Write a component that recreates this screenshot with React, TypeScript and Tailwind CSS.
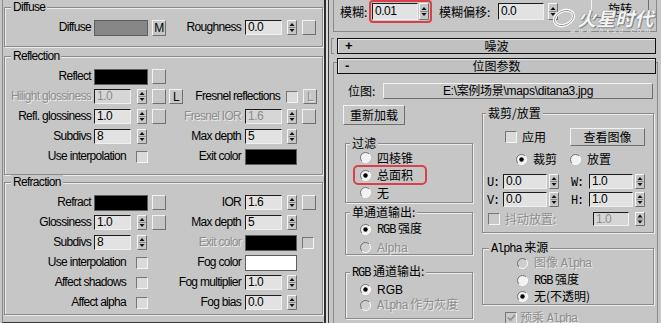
import React from "react";

const SANS = "font-['Liberation_Sans','Noto_Sans_CJK_SC',sans-serif]";
const CJK = "font-['Noto_Sans_CJK_SC',sans-serif]";
const MONO = "font-['Liberation_Mono','Noto_Sans_CJK_SC',monospace] text-[12px] tracking-[-1.1px]";
const DIM = "text-[#8d8d8d] [text-shadow:1px_1px_0_#ececec]";
const RAISED = "border border-t-[#f2f2f2] border-l-[#f2f2f2] border-b-[#6f6f6f] border-r-[#6f6f6f]";
const SUNKEN = "border border-t-[#1c1c1c] border-l-[#1c1c1c] border-b-[#f0f0f0] border-r-[#f0f0f0]";

type Kids = { children?: React.ReactNode; className?: string };

const Spin = ({ h = 15, className = "" }: { h?: number; className?: string }) => {
  const m = h / 2;
  return (
    <svg width={10} height={h} viewBox={`0 0 10 ${h}`} className={`shrink-0 ${className}`}>
      <rect x={0} y={0} width={10} height={h} fill="#c6c6c6" />
      <path d={`M0.5 ${h - 0.5}V0.5H9.5`} stroke="#f6f6f6" fill="none" />
      <path d={`M9.5 0.5V${h - 0.5}H0.5`} stroke="#6f6f6f" fill="none" />
      <path d={`M1.5 ${m}H8.5`} stroke="#8a8a8a" />
      <path d={`M5 ${m - 4.5}L7.5 ${m - 1.5}H2.5Z`} fill="#111" />
      <path d={`M2.5 ${m + 1.5}H7.5L5 ${m + 4.5}Z`} fill="#111" />
    </svg>
  );
};

const Field = ({ v, cls, dim = false }: { v: string; cls: string; dim?: boolean }) => (
  <div
    className={`flex shrink-0 items-center pl-[2px] text-[12px] leading-[13px] tracking-[-0.5px] ${SANS} ${SUNKEN} ${
      dim ? "bg-[#d6d6d6] text-[#8d8d8d]" : "bg-[#e2e2e2] text-black"
    } ${cls}`}
  >
    {v}
  </div>
);

const Btn = ({ children, className = "" }: Kids) => (
  <div className={`flex shrink-0 items-center justify-center leading-[14px] ${RAISED} ${className}`}>{children}</div>
);

const Swatch = ({ className = "" }: { className?: string }) => (
  <div className={`h-[16px] shrink-0 border border-[#5e5e5e] ${className}`} />
);

const Check = ({ checked = false, dim = false, className = "" }: { checked?: boolean; dim?: boolean; className?: string }) => (
  <div
    className={`flex h-[12px] w-[12px] shrink-0 items-center justify-center border border-t-[#767676] border-l-[#767676] border-b-[#f4f4f4] border-r-[#f4f4f4] ${
      dim ? "bg-[#c9c9c9]" : "bg-[#dadada]"
    } ${className}`}
  >
    {checked && (
      <svg width="9" height="8" viewBox="0 0 9 8">
        <path d="M1 3.5L3.5 6L8 1" stroke={dim ? "#8d8d8d" : "#000"} strokeWidth="1.6" fill="none" />
      </svg>
    )}
  </div>
);

const Radio = ({ checked = false, dim = false }: { checked?: boolean; dim?: boolean }) => (
  <svg width="11" height="11" viewBox="0 0 11 11" className="shrink-0">
    <circle cx="5.5" cy="5.5" r="5" fill={dim ? "#cdcdcd" : "#f2f2f2"} />
    <path d="M1.96 9.04A5 5 0 0 1 9.04 1.96" stroke="#6e6e6e" fill="none" />
    <path d="M9.04 1.96A5 5 0 0 1 1.96 9.04" stroke="#ffffff" fill="none" />
    {checked && <circle cx="5.5" cy="5.5" r="2.2" fill="#000" />}
  </svg>
);

const Group = ({ title, className = "", legendClass = "", children }: Kids & { title: React.ReactNode; legendClass?: string }) => (
  <fieldset className={`border border-[#8a8a8a] shadow-[inset_1px_1px_0_#ececec,1px_1px_0_#ececec] ${className}`}>
    <legend className={`bg-[#c6c6c6] px-[2px] leading-[14px] ${legendClass}`}>{title}</legend>
    {children}
  </fieldset>
);

// left (V-Ray material) rows
const Lbl = ({ children, className = "", dim = false }: Kids & { dim?: boolean }) => (
  <span className={`flex shrink-0 justify-end whitespace-nowrap leading-[15px] ${dim ? DIM : ""} ${className}`}>{children}</span>
);

const Row = ({ left, right }: { left?: React.ReactNode; right?: React.ReactNode }) => (
  <div className="flex h-[15px] items-center">
    <div className="flex w-[180px] shrink-0 items-center">{left}</div>
    <div className="flex items-center">{right}</div>
  </div>
);

const SpinL = ({ label, v, btn = true, l, dim = false }: { label: string; v: string; btn?: boolean; l?: boolean; dim?: boolean }) => (
  <>
    <Lbl className="w-[86px]" dim={dim}>{label}</Lbl>
    <Field cls="ml-[3px] h-[15px] w-[37px]" v={v} dim={dim} />
    <Spin className="ml-[6px]" />
    {btn && <Btn className="ml-[5px] h-[15px] w-[14px]" />}
    {l && <Btn className="ml-[3px] h-[15px] w-[14px]">L</Btn>}
  </>
);

const SpinR = ({ label, v, btn = true, dim = false }: { label: string; v: string; btn?: boolean; dim?: boolean }) => (
  <>
    <Lbl className="w-[56px]" dim={dim}>{label}</Lbl>
    <Field cls="ml-[4px] h-[15px] w-[37px]" v={v} dim={dim} />
    <Spin className="ml-[5px]" />
    {btn && <Btn className="ml-[5px] h-[15px] w-[14px]" />}
  </>
);

const CheckL = ({ label }: { label: string }) => (
  <>
    <Lbl className="w-[121px]">{label}</Lbl>
    <Check className="ml-[10px]" />
  </>
);

const SwatchL = ({ label, color }: { label: string; color: string }) => (
  <>
    <Lbl className="w-[86px]">{label}</Lbl>
    <Swatch className={`ml-[3px] w-[54px] ${color}`} />
    <Btn className="ml-[4px] h-[15px] w-[14px]" />
  </>
);

const LeftPanel = () => (
  <div className={`ml-[2px] flex h-[323px] w-[321px] shrink-0 flex-col border-b border-l border-b-[#3a3a3a] border-l-[#8a8a8a] pl-[1px] text-[12px] tracking-[-0.7px] ${SANS}`}>
    <Group title="Diffuse" className="pb-[11px]" legendClass="ml-[6px]">
      <div className="mt-[6px] flex flex-col">
        <Row
          left={
            <>
              <Lbl className="w-[86px]">Diffuse</Lbl>
              <Swatch className="ml-[3px] w-[54px] bg-[#878787]" />
              <Btn className="ml-[4px] h-[16px] w-[14px]">M</Btn>
            </>
          }
          right={<SpinR label="Roughness" v="0.0" />}
        />
      </div>
    </Group>

    <Group title="Reflection" className="mt-[2px] pb-[10px]" legendClass="ml-[6px]">
      <div className="mt-[6px] flex flex-col gap-[5px]">
        <Row left={<SwatchL label="Reflect" color="bg-black" />} />
        <Row
          left={<SpinL label="Hilight glossiness" v="1.0" l dim />}
          right={
            <>
              <Lbl className="w-[95px]">Fresnel reflections</Lbl>
              <Check className="ml-[6px]" />
              <Btn className={`ml-[5px] h-[15px] w-[14px] ${DIM}`}>L</Btn>
            </>
          }
        />
        <Row left={<SpinL label="Refl. glossiness" v="1.0" />} right={<SpinR label="Fresnel IOR" v="1.6" dim />} />
        <Row left={<SpinL label="Subdivs" v="8" btn={false} />} right={<SpinR label="Max depth" v="5" btn={false} />} />
        <Row
          left={<CheckL label="Use interpolation" />}
          right={
            <>
              <Lbl className="w-[56px]">Exit color</Lbl>
              <Swatch className="ml-[4px] w-[52px] bg-black" />
            </>
          }
        />
      </div>
    </Group>

    <Group title="Refraction" className="pb-[4px]" legendClass="ml-[6px]">
      <div className="mt-[6px] flex flex-col gap-[5px]">
        <Row left={<SwatchL label="Refract" color="bg-black" />} right={<SpinR label="IOR" v="1.6" />} />
        <Row left={<SpinL label="Glossiness" v="1.0" />} right={<SpinR label="Max depth" v="5" btn={false} />} />
        <Row
          left={<SpinL label="Subdivs" v="8" btn={false} />}
          right={
            <>
              <Lbl className="w-[56px]" dim>Exit color</Lbl>
              <Swatch className="ml-[4px] w-[52px] bg-black" />
              <Check className="ml-[5px]" dim />
            </>
          }
        />
        <Row
          left={<CheckL label="Use interpolation" />}
          right={
            <>
              <Lbl className="w-[56px]">Fog color</Lbl>
              <Swatch className="ml-[4px] w-[52px] bg-white" />
            </>
          }
        />
        <Row left={<CheckL label="Affect shadows" />} right={<SpinR label="Fog multiplier" v="1.0" btn={false} />} />
        <Row left={<CheckL label="Affect alpha" />} right={<SpinR label="Fog bias" v="0.0" btn={false} />} />
      </div>
    </Group>
  </div>
);

// right (bitmap parameters) panel
const Header = ({ sign, title, className = "" }: { sign: string; title: string; className?: string }) => (
  <div className={`flex h-[16px] w-[319px] shrink-0 items-center border border-[#111] bg-[#c1c1c1] shadow-[inset_1px_1px_0_#e6e6e6] ${className}`}>
    <span className={`w-[22px] pl-[7px] text-[13px] font-bold leading-[14px] ${SANS}`}>{sign}</span>
    <span className="flex-1 text-center leading-[14px]">{title}</span>
    <span className="w-[22px]" />
  </div>
);

const Opt = ({ label, checked = false, dim = false, className = "" }: { label: React.ReactNode; checked?: boolean; dim?: boolean; className?: string }) => (
  <div className={`flex items-center ${className}`}>
    <Radio checked={checked} dim={dim} />
    <span className={`ml-[6px] whitespace-nowrap leading-[14px] ${dim ? DIM : ""}`}>{label}</span>
  </div>
);

const Mono = ({ children }: Kids) => <span className={MONO}>{children}</span>;

const RightPanel = () => (
  <div className={`relative flex h-[323px] w-[332px] shrink-0 flex-col text-[12px] ${CJK}`}>
    <div className="ml-[4px] flex h-[32px] w-[324px] shrink-0 items-start border-b border-l border-r border-[#8a8a8a]">
      <span className="ml-[6px] mt-[3px] w-[29px] leading-[17px]">模糊:</span>
      <div className="flex h-[23px] items-center rounded-[4px] border-2 border-[#d9414a] px-[1px]">
        <Field cls="h-[17px] w-[46px]" v="0.01" />
        <Spin h={17} className="ml-[1px]" />
      </div>
      <span className="ml-[7px] mt-[3px] w-[59px] leading-[17px]">模糊偏移:</span>
      <Field cls="mt-[3px] h-[17px] w-[46px]" v="0.0" />
      <Spin h={17} className="ml-[4px] mt-[3px]" />
      <Btn className="ml-[33px] h-[18px] w-[58px] border-t-0">旋转</Btn>
    </div>

    {/* watermark */}
    <div className="pointer-events-none absolute left-[222px] top-[7px] flex flex-col items-end">
      <div className="flex items-center">
        <svg width="26" height="22" viewBox="0 0 26 22">
          <ellipse cx="13" cy="11" rx="10" ry="7" transform="rotate(-25 13 11)" fill="none" stroke="#fff" strokeWidth="3" />
          <ellipse cx="13" cy="11" rx="10" ry="7" transform="rotate(-25 13 11)" fill="none" stroke="#8a8a8a" strokeWidth="0.8" />
        </svg>
        <span className="text-[19px] font-bold italic leading-[20px] text-[#f4f4f4] [text-shadow:0_0_1px_#555,1px_1px_0_#8a8a8a]">火星时代</span>
      </div>
      <span className={`-mt-[2px] text-[7px] italic leading-[7px] tracking-[3px] text-white [text-shadow:0_0_1px_#666] ${SANS}`}>www.hxsd.com</span>
    </div>

    <div className="mt-[6px] flex h-[16px] shrink-0 items-center">
      <div className="ml-[2px] h-[16px] w-[3px] border-y border-l border-[#8a8a8a]" />
      <Header sign="+" title="噪波" className="ml-[3px]" />
    </div>

    <div className="ml-[4px] mt-[8px] flex w-[325px] flex-1 flex-col border-l border-r border-t border-[#8a8a8a]">
      <Header sign="-" title="位图参数" className="-mt-[5px] ml-[3px]" />
      <div className="ml-[14px] mt-[9px] flex h-[16px] items-center">
        <span className="w-[35px] leading-[16px]">位图:</span>
        <Btn className={`h-[16px] w-[270px] tracking-[-0.3px] ${SANS}`}>E:\案例场景\maps\ditana3.jpg</Btn>
      </div>

      <div className="mt-[6px] flex">
        <div className="ml-[9px] flex w-[130px] shrink-0 flex-col">
          <Btn className="h-[20px] w-[62px]">重新加载</Btn>
          <Group title="过滤" className="ml-[2px] mt-[11px] w-[128px] pb-[2px]" legendClass="ml-[4px]">
            <Opt label="四棱锥" className="ml-[14px] h-[15px]" />
            <div className="ml-[7px] flex h-[20px] w-[74px] items-center rounded-[5px] border-2 border-[#d9414a] pl-[5px]">
              <Radio checked />
              <span className="ml-[6px] leading-[14px]">总面积</span>
            </div>
            <Opt label="无" className="ml-[14px] h-[15px]" />
          </Group>
          <Group title="单通道输出:" className="ml-[2px] mt-[2px] w-[128px]" legendClass="ml-[4px]">
            <div className="flex flex-col gap-[5px] pt-[3px]">
              <Opt label={<><Mono>RGB</Mono> 强度</>} checked className="ml-[14px] h-[14px]" />
              <Opt label={<span className={SANS}>Alpha</span>} dim className="ml-[14px] h-[13px]" />
            </div>
          </Group>
          <Group title={<><Mono>RGB</Mono> 通道输出:</>} className="ml-[2px] mt-[9px] w-[128px] pb-[6px]" legendClass="ml-[4px]">
            <div className="flex flex-col gap-[2px] pt-[2px]">
              <Opt label={<span className={SANS}>RGB</span>} checked className="ml-[14px] h-[14px]" />
              <Opt label={<><Mono>Alpha</Mono> 作为灰度</>} dim className="ml-[14px] h-[14px]" />
            </div>
          </Group>
        </div>

        <div className="ml-[9px] flex w-[172px] shrink-0 flex-col">
          <Group title="裁剪/放置" className="mt-[1px] pb-[6px]" legendClass="ml-[3px]">
            <div className="mt-[8px] flex h-[18px] items-center">
              <Check className="ml-[22px]" />
              <span className="ml-[5px] leading-[14px]">应用</span>
              <Btn className="ml-auto mr-[8px] h-[18px] w-[75px]">查看图像</Btn>
            </div>
            <div className="mt-[6px] flex h-[14px] items-center">
              <div className="ml-[33px]"><Radio checked /></div>
              <span className="ml-[6px] leading-[14px]">裁剪</span>
              <div className="ml-[13px]"><Radio /></div>
              <span className="ml-[6px] leading-[14px]">放置</span>
            </div>
            {[
              ["U:", "0.0", "W:", "1.0", "mt-[8px]"],
              ["V:", "0.0", "H:", "1.0", "mt-[3px]"],
            ].map(([a, av, b, bv, mt]) => (
              <div key={a} className={`flex h-[15px] items-center ${mt}`}>
                <span className="ml-[4px] w-[16px] leading-[14px]"><Mono>{a}</Mono></span>
                <Field cls="h-[15px] w-[44px]" v={av} />
                <Spin className="ml-[2px]" />
                <span className="ml-[12px] w-[18px] leading-[14px]"><Mono>{b}</Mono></span>
                <Field cls="h-[15px] w-[44px]" v={bv} />
                <Spin className="ml-[2px]" />
              </div>
            ))}
            <div className="mt-[5px] flex h-[14px] items-center">
              <Check className="ml-[5px]" dim />
              <span className={`ml-[5px] w-[88px] leading-[14px] ${DIM}`}>抖动放置:</span>
              <Field cls="h-[14px] w-[36px]" v="1.0" dim />
              <Spin h={14} className="ml-[6px]" />
            </div>
          </Group>

          <Group title={<><Mono>Alpha</Mono> 来源</>} className="mt-[7px] pb-[1px]" legendClass="ml-[6px]">
            <Opt label={<>图像 <Mono>Alpha</Mono></>} dim className="ml-[34px] h-[14px]" />
            <Opt label={<><Mono>RGB</Mono> 强度</>} className="ml-[34px] mt-[3px] h-[14px]" />
            <Opt label="无(不透明)" checked className="ml-[34px] mt-[2px] h-[14px]" />
          </Group>

          <div className="mt-[6px] flex h-[13px] items-center">
            <Check className="ml-[23px]" checked dim />
            <span className={`ml-[3px] leading-[14px] ${DIM}`}>
              预乘 <Mono>Alpha</Mono>
            </span>
          </div>
        </div>
      </div>
    </div>
  </div>
);

const App = () => (
  <div className="flex h-[323px] w-[661px] overflow-hidden bg-[#c6c6c6] text-black">
    <LeftPanel />
    <div className="ml-[1px] flex h-full shrink-0">
      <div className="w-[2px] bg-[#2e2e2e]" />
      <div className="w-[2px] bg-[#dadada]" />
      <div className="w-[1px] bg-[#3a3a3a]" />
    </div>
    <RightPanel />
  </div>
);

export default App;
